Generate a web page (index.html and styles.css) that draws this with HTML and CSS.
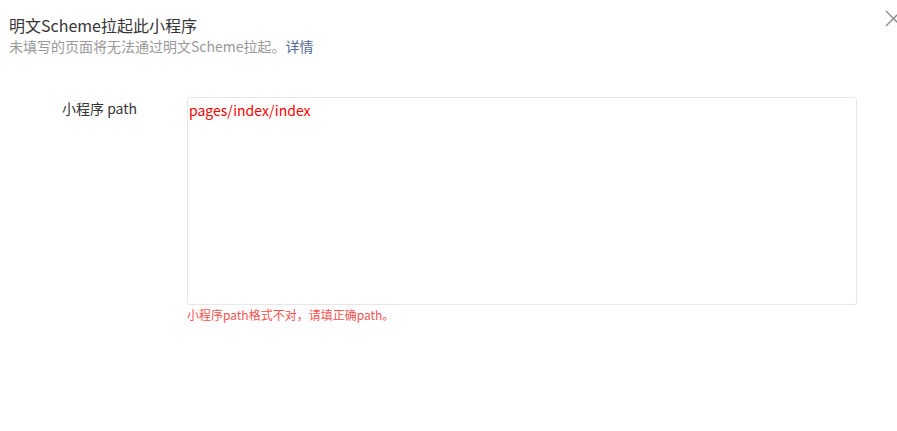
FILE: index.html
```html
<!DOCTYPE html>
<html lang="zh-CN">
<head>
  <meta charset="UTF-8">
  <meta name="viewport" content="width=device-width, initial-scale=1.0">
  <title>明文Scheme拉起此小程序</title>
  <link rel="stylesheet" href="styles.css">
</head>
<body>
  <div id="dialog">
    <div id="dialog-head">
      <h2 class="title">明文Scheme拉起此小程序</h2>
      <p class="desc">未填写的页面将无法通过明文Scheme拉起。<a href="#" class="link">详情</a></p>
    </div>
    <button id="close" aria-label="关闭">
      <svg width="17" height="17" viewBox="0 0 17 17"><path d="M1 1L16 16M16 1L1 16" stroke="#8a8a8a" stroke-width="1.3" fill="none"/></svg>
    </button>

    <div class="form-row">
      <label class="form-label">小程序 path</label>
      <div class="form-control">
        <div class="textarea">pages/index/index</div>
        <p class="form-error">小程序path格式不对，请填正确path。</p>
      </div>
    </div>
  </div>
</body>
</html>
```

FILE: styles.css
```css
body {
  margin: 0;
  font-family: "Noto Sans CJK SC", "Noto Sans", sans-serif;
  background: #fff;
  overflow: hidden;
}

#dialog {
  position: relative;
  height: 431px;
}

#dialog-head {
  padding: 14px 9px 0;
}

.title {
  margin: 0;
  font-size: 16px;
  font-weight: normal;
  line-height: 22px;
  color: #353535;
}

.desc {
  margin: 0;
  font-size: 14px;
  line-height: 20px;
  color: #9a9a9a;
}

.link {
  color: #576b95;
  text-decoration: none;
}

#close {
  position: absolute;
  top: 10px;
  right: -5px;
  padding: 0;
  border: none;
  background: none;
}

.form-row {
  display: flex;
  margin-top: 41px;
}

.form-label {
  width: 125px;
  padding-left: 62px;
  font-size: 14px;
  line-height: 22px;
  color: #353535;
}

.form-control {
  width: 670px;
}

.textarea {
  height: 208px;
  padding: 1px 1px;
  border: 1px solid #e7e7e7;
  border-radius: 3px;
  box-sizing: border-box;
  font-size: 14px;
  line-height: 22px;
  color: #ff0000;
}

.form-error {
  margin: 1px 0 0;
  font-size: 12px;
  line-height: 18px;
  color: #fa5151;
}
```
